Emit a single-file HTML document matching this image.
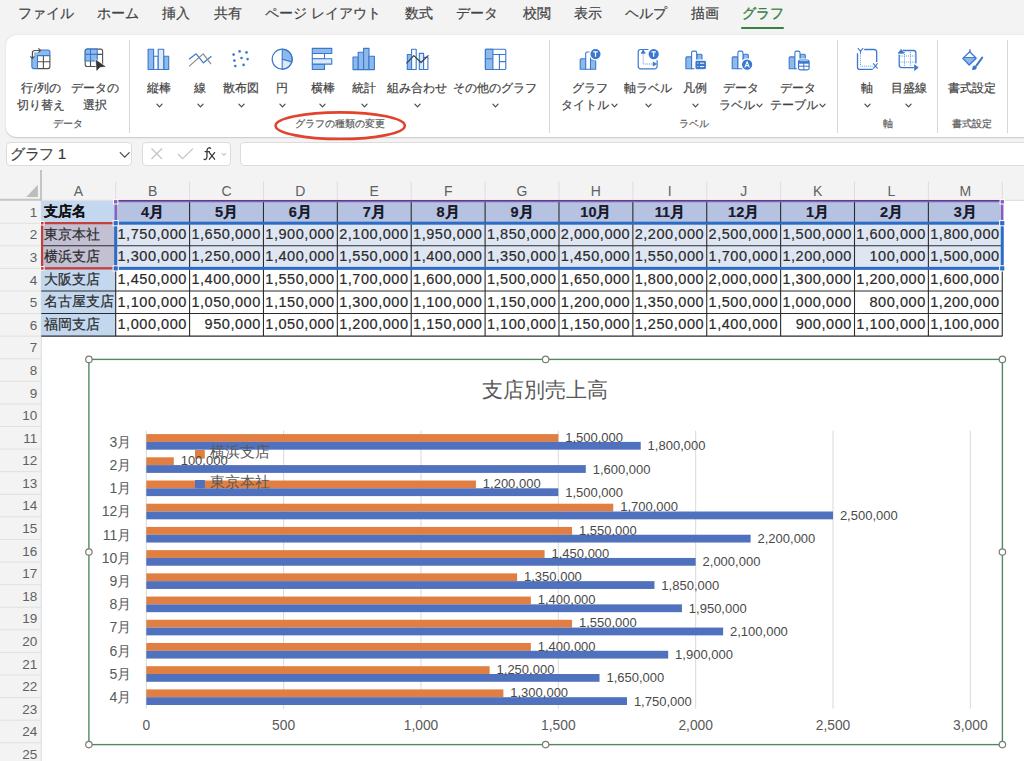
<!DOCTYPE html>
<html lang="ja"><head><meta charset="utf-8"><title>Excel</title><style>
*{box-sizing:border-box}
html,body{margin:0;padding:0}
body{width:1024px;height:761px;overflow:hidden;position:relative;background:#f3f3f3;font-family:"Liberation Sans",sans-serif;color:#424242}
.a{position:absolute;white-space:nowrap;-webkit-text-stroke:0.2px currentColor}
.n{-webkit-text-stroke:0}
.c{text-align:center}
.r{text-align:right}
</style></head><body>
<div class="a" style="left:18.3px;top:7.0px;font-size:13.9px;line-height:13.9px;">ファイル</div>
<div class="a" style="left:96.9px;top:7.0px;font-size:13.9px;line-height:13.9px;">ホーム</div>
<div class="a" style="left:162px;top:7.0px;font-size:13.9px;line-height:13.9px;">挿入</div>
<div class="a" style="left:213.7px;top:7.0px;font-size:13.9px;line-height:13.9px;">共有</div>
<div class="a" style="left:264.8px;top:7.0px;font-size:13.9px;line-height:13.9px;">ページ レイアウト</div>
<div class="a" style="left:405.4px;top:7.0px;font-size:13.9px;line-height:13.9px;">数式</div>
<div class="a" style="left:456.2px;top:7.0px;font-size:13.9px;line-height:13.9px;">データ</div>
<div class="a" style="left:522.6px;top:7.0px;font-size:13.9px;line-height:13.9px;">校閲</div>
<div class="a" style="left:574px;top:7.0px;font-size:13.9px;line-height:13.9px;">表示</div>
<div class="a" style="left:625.3px;top:7.0px;font-size:13.9px;line-height:13.9px;">ヘルプ</div>
<div class="a" style="left:690.5px;top:7.0px;font-size:13.9px;line-height:13.9px;">描画</div>
<div class="a" style="left:742.3px;top:7.0px;font-size:13.9px;line-height:13.9px;color:#3a7f45;-webkit-text-stroke:0.4px #3a7f45;">グラフ</div>
<div class="a" style="left:740.7px;top:26.5px;width:43.3px;height:2.6px;border-radius:2px;background:#3a7f45"></div>
<div class="a" style="left:6px;top:35px;width:1040px;height:102px;background:#fff;border-radius:10px;box-shadow:0 0.5px 1.5px rgba(0,0,0,0.18)"></div>
<div class="a" style="left:129.20000000000002px;top:39.5px;width:1.2px;height:93px;background:#d6d6d6"></div>
<div class="a" style="left:548.9px;top:39.5px;width:1.2px;height:93px;background:#d6d6d6"></div>
<div class="a" style="left:837.1999999999999px;top:39.5px;width:1.2px;height:93px;background:#d6d6d6"></div>
<div class="a" style="left:937.0px;top:39.5px;width:1.2px;height:93px;background:#d6d6d6"></div>
<div class="a" style="left:1007.3px;top:39.5px;width:1.2px;height:93px;background:#d6d6d6"></div>

<svg class="a" style="left:0;top:0" width="1024" height="80" viewBox="0 0 1024 80" fill="none" stroke-linejoin="round">
<!-- row/col switch -->
<path d="M33.85 50H47.9a2 2 0 0 1 2 2V55.6H37.5V68.6H33.85a2 2 0 0 1-2-2V52a2 2 0 0 1 2-2z" fill="#8dbaeb" stroke="#3a78cf" stroke-width="1.1"/>
<path d="M37.5 55.6H49.9V66.6a2 2 0 0 1-2 2H37.5z" fill="#fff"/>
<path d="M49.9 55.6V66.6a2 2 0 0 1-2 2H37.5M43.4 55.6V68.6M37.5 61.8H49.9" stroke="#505050" stroke-width="1.1"/>
<path d="M37.5 68.6V55.6H49.9" stroke="#3a78cf" stroke-width="1.1"/>
<path d="M32.4 58.2V53a2.5 2.5 0 0 1 2.5-2.5H40.2" stroke="#fff" stroke-width="3.4"/>
<path d="M32.4 58.2V53a2.5 2.5 0 0 1 2.5-2.5H40.2" stroke="#505050" stroke-width="1.2"/>
<path d="M38.4 48.4l2.1 2.1-2.1 2.1M30.3 56.4l2.1 2.1 2.1-2.1" stroke="#505050" stroke-width="1.2"/>
<!-- data select -->
<path d="M87.2 49.1h13.4a2 2 0 0 1 2 2v13.4a2 2 0 0 1-2 2h-13.4a2 2 0 0 1-2-2v-13.4a2 2 0 0 1 2-2z" fill="#fff" stroke="#505050" stroke-width="1.1"/>
<path d="M87.2 49.1h10v11.9h-12v-9.9a2 2 0 0 1 2-2z" fill="#8dbaeb" stroke="#3a78cf" stroke-width="1.1"/>
<path d="M90.5 49.1v11.9M85.2 54.4h12" stroke="#3a78cf" stroke-width="1.1"/>
<path d="M90.5 61v5.5M97.2 54.4h5.4" stroke="#505050" stroke-width="1.1"/>
<path d="M96 60.2L105.2 66.5 100 66.9 96.8 70.4z" fill="#fff" stroke="#fff" stroke-width="1.6"/>
<path d="M96 60.2L105.2 66.5 100 66.9 96.8 70.4z" fill="#333" stroke="#333" stroke-width="0.5"/>
<!-- column chart -->
<rect x="153.6" y="56.3" width="4.6" height="13.2" fill="#fff" stroke="#3a78cf" stroke-width="1.1"/>
<rect x="163.7" y="56.3" width="5" height="13.2" fill="#8dbaeb" stroke="#3a78cf" stroke-width="1.1"/>
<rect x="148.1" y="49.3" width="5.5" height="20.2" fill="#8dbaeb" stroke="#3a78cf" stroke-width="1.1"/>
<rect x="158.2" y="49.3" width="5.5" height="20.2" fill="#dce9f8" stroke="#3a78cf" stroke-width="1.1"/>
<!-- line -->
<path d="M189 59.2l7.2-5.4 7.2 9 8-6.6" stroke="#3a78cf" stroke-width="1.2"/>
<path d="M189 66.4l14.2-12.5 7.8 10.3" stroke="#8a8a8a" stroke-width="1.2"/>
<!-- scatter -->
<g fill="#3a78cf"><circle cx="233.6" cy="54.6" r="1.3"/><circle cx="239.6" cy="51.4" r="1.3"/><circle cx="246.5" cy="52.4" r="1.3"/><circle cx="241.5" cy="58" r="1.3"/><circle cx="234.4" cy="60.6" r="1.3"/><circle cx="247.6" cy="59.1" r="1.3"/><circle cx="235.3" cy="66" r="1.3"/><circle cx="243.6" cy="64.9" r="1.3"/></g>
<!-- pie -->
<path d="M282.2 59.2V49.2A10 10 0 0 1 291.8 62z" fill="#8dbaeb" stroke="#3a78cf" stroke-width="1.1"/>
<path d="M282.2 59.2L291.8 62A10 10 0 0 1 282.2 69.2z" fill="#dce9f8" stroke="#3a78cf" stroke-width="1.1"/>
<circle cx="282.2" cy="59.2" r="10" stroke="#3a78cf" stroke-width="1.2"/>
<!-- bar chart -->
<rect x="312.3" y="53.5" width="12.2" height="5.3" fill="#fff" stroke="#3a78cf" stroke-width="1.1"/>
<rect x="312.3" y="64.1" width="12.2" height="5.4" fill="#8dbaeb" stroke="#3a78cf" stroke-width="1.1"/>
<rect x="312.3" y="48.4" width="19.5" height="5.1" fill="#8dbaeb" stroke="#3a78cf" stroke-width="1.1"/>
<rect x="312.3" y="58.8" width="19.5" height="5.3" fill="#dce9f8" stroke="#3a78cf" stroke-width="1.1"/>
<!-- stats -->
<rect x="353" y="57" width="5.2" height="12.6" fill="#8dbaeb" stroke="#3a78cf" stroke-width="1.1"/>
<rect x="358.2" y="52.2" width="5.4" height="17.4" fill="#8dbaeb" stroke="#3a78cf" stroke-width="1.1"/>
<rect x="363.6" y="48.4" width="5.4" height="21.2" fill="#8dbaeb" stroke="#3a78cf" stroke-width="1.1"/>
<rect x="369" y="56.2" width="5.4" height="13.4" fill="#8dbaeb" stroke="#3a78cf" stroke-width="1.1"/>
<!-- combo -->
<rect x="407.3" y="54.5" width="4.3" height="15" fill="#8dbaeb" stroke="#3a78cf" stroke-width="1.1"/>
<rect x="411.6" y="49.3" width="4.6" height="20.2" fill="#fff" stroke="#3a78cf" stroke-width="1.1"/>
<rect x="419.3" y="53.4" width="4.3" height="16.1" fill="#dce9f8" stroke="#3a78cf" stroke-width="1.1"/>
<rect x="423.6" y="57.4" width="4.3" height="12.1" fill="#fff" stroke="#3a78cf" stroke-width="1.1"/>
<path d="M406.5 63.4l7.3-7.8 7.2 6.9 7.5-7.1" stroke="#3c3c3c" stroke-width="1.2"/>
<!-- other charts -->
<rect x="485.4" y="49.3" width="20.4" height="20.2" rx="1" fill="#fff" stroke="#3a78cf" stroke-width="1.1"/>
<rect x="485.4" y="49.3" width="7.5" height="20.2" fill="#8dbaeb" stroke="#3a78cf" stroke-width="1.1"/>
<path d="M485.4 58.7h7.5M492.9 54.5h12.9M499.4 54.5v15M499.4 61.6h6.4" stroke="#3a78cf" stroke-width="1.1"/>
<!-- chart title -->
<path d="M581.2 58.7h3.6a1 1 0 0 1 1 1v9.5h-5.6v-9.5a1 1 0 0 1 1-1z" fill="#8dbaeb" stroke="#3a78cf" stroke-width="1.1"/>
<path d="M591.1 60h3.6a1 1 0 0 1 1 1v8.2h-5.6v-8.2a1 1 0 0 1 1-1z" fill="#8dbaeb" stroke="#3a78cf" stroke-width="1.1"/>
<path d="M587.3 52h1.6a1.6 1.6 0 0 1 1.6 1.6v15.6h-4.8v-15.6a1.6 1.6 0 0 1 1.6-1.6z" fill="#fff" stroke="#3a78cf" stroke-width="1.1"/>
<circle cx="595.5" cy="54.1" r="5.7" fill="#3a78cf" stroke="#fff" stroke-width="1.3"/>
<path d="M593.3 51.8h4.4M595.5 51.8v5" stroke="#fff" stroke-width="1.2"/>
<!-- axis title -->
<path d="M648.5 49.5h-7.8a2.5 2.5 0 0 0-2.5 2.5v14.3a2.5 2.5 0 0 0 2.5 2.5h13.9a2.5 2.5 0 0 0 2.5-2.5v-6" stroke="#3a78cf" stroke-width="1.2"/>
<path d="M643.2 53.6v10.4h10" stroke="#3a78cf" stroke-width="0.8" stroke-dasharray="1 1"/>
<path d="M641.2 53.2l2-3.2 2 3.2z M653.2 62l3.2 2-3.2 2z" fill="#3a78cf" stroke="#3a78cf" stroke-width="0.8"/>
<circle cx="653.7" cy="54.1" r="5.8" fill="#3a78cf" stroke="#fff" stroke-width="1.3"/>
<path d="M651.5 51.8h4.4M653.7 51.8v5" stroke="#fff" stroke-width="1.2"/>
<!-- legend -->
<path d="M686.9 56.9h3.8a1 1 0 0 1 1 1v10.9h-5.8v-10.9a1 1 0 0 1 1-1z" fill="#8dbaeb" stroke="#3a78cf" stroke-width="1.1"/>
<path d="M697.8 54.3h3.2a1 1 0 0 1 1 1v13.5h-5.2v-13.5a1 1 0 0 1 1-1z" fill="#8dbaeb" stroke="#3a78cf" stroke-width="1.1"/>
<path d="M693.1999999999999 51.1h1.9a1.6 1.6 0 0 1 1.6 1.6v16.1h-5.1v-16.1a1.6 1.6 0 0 1 1.6-1.6z" fill="#fff" stroke="#3a78cf" stroke-width="1.1"/>
<rect x="694.9" y="60.1" width="11.6" height="9.7" rx="2" fill="#3a78cf" stroke="#fff" stroke-width="1.1"/>
<path d="M697.4 63.2h1M700 63.2h4.2M697.4 66.6h1M700 66.6h4.2" stroke="#fff" stroke-width="1"/>
<!-- data labels -->
<path d="M733.2 56.9h3.8a1 1 0 0 1 1 1v10.9h-5.8v-10.9a1 1 0 0 1 1-1z" fill="#8dbaeb" stroke="#3a78cf" stroke-width="1.1"/>
<path d="M744.1 54.3h3.2a1 1 0 0 1 1 1v13.5h-5.2v-13.5a1 1 0 0 1 1-1z" fill="#8dbaeb" stroke="#3a78cf" stroke-width="1.1"/>
<path d="M739.5 51.1h1.9a1.6 1.6 0 0 1 1.6 1.6v16.1h-5.1v-16.1a1.6 1.6 0 0 1 1.6-1.6z" fill="#fff" stroke="#3a78cf" stroke-width="1.1"/>
<circle cx="747.1" cy="64.6" r="5.8" fill="#3a78cf" stroke="#fff" stroke-width="1.3"/>
<path d="M744.8 67.6l2.3-6 2.3 6M745.6 65.6h3" stroke="#fff" stroke-width="1.1"/>
<!-- data table -->
<path d="M790.2 56.9h3.8a1 1 0 0 1 1 1v10.9h-5.8v-10.9a1 1 0 0 1 1-1z" fill="#8dbaeb" stroke="#3a78cf" stroke-width="1.1"/>
<path d="M801.1 54.3h3.2a1 1 0 0 1 1 1v13.5h-5.2v-13.5a1 1 0 0 1 1-1z" fill="#8dbaeb" stroke="#3a78cf" stroke-width="1.1"/>
<path d="M796.5 51.1h1.9a1.6 1.6 0 0 1 1.6 1.6v16.1h-5.1v-16.1a1.6 1.6 0 0 1 1.6-1.6z" fill="#fff" stroke="#3a78cf" stroke-width="1.1"/>
<rect x="798" y="59.5" width="11.6" height="10.9" rx="2" fill="#fff" stroke="#fff" stroke-width="2"/>
<rect x="798.5" y="60" width="10.6" height="9.9" rx="1.8" fill="#fff" stroke="#3a78cf" stroke-width="1.2"/>
<path d="M798.5 62.4h10.6" stroke="#3a78cf" stroke-width="2.6"/>
<path d="M803.8 62v7.9M798.5 66.2h10.6" stroke="#3a78cf" stroke-width="1"/>
<!-- axes -->
<path d="M864.2 49.5h10a2.5 2.5 0 0 1 2.5 2.5v10M872.8 69.4h-12.8a2.5 2.5 0 0 1-2.5-2.5v-13.6" stroke="#3a78cf" stroke-width="1.3"/>
<path d="M857.8 48.2l2.7 2.9 2.7-2.9M860.5 51.1v2.6M873.2 63.4l4.4 5.2M877.6 63.4l-4.4 5.2" stroke="#3a78cf" stroke-width="1.1"/>
<path d="M860.5 54.6v11.6h12" stroke="#3a78cf" stroke-width="0.8" stroke-dasharray="0.9 1"/>
<!-- gridlines -->
<path d="M899.2 54.4v10.7a2.5 2.5 0 0 0 2.5 2.5h12.2M902.6 50.5h10.8a2.5 2.5 0 0 1 2.5 2.5v10.6" stroke="#3a78cf" stroke-width="1.3"/>
<path d="M904.5 52v14M910.4 52v14M900.5 56h14M900.5 62.1h14" stroke="#3a78cf" stroke-width="0.8" stroke-dasharray="0.9 1"/>
<path d="M898.2 53.2l2.9-3.8 2.9 3.8z M914.6 64.8l3.6 2.8-3.6 2.8z" fill="#3a78cf" stroke="#3a78cf" stroke-width="0.8"/>
<!-- format -->
<path d="M963.65 57.6H975.6L976.2 58.2 969.2 65 962.8 58.4z" fill="#8dbaeb"/>
<path d="M962.8 58.4L969.8 51.8 976.2 58.2 969.2 65z" stroke="#3a78cf" stroke-width="1.3"/>
<path d="M963.4 57.6h12.4" stroke="#3a78cf" stroke-width="1"/>
<path d="M970 49.2v3.6" stroke="#3a78cf" stroke-width="1.3"/>
<path d="M982.2 57.6l-5.6 7.8" stroke="#3a78cf" stroke-width="2" stroke-linecap="round"/>
<path d="M975.6 65.6c1.4 0.6 1.6 2.6 0.4 3.6-1 0.8-2.8 0.9-4.2 0.6 0.6-0.7 0.5-2.2 1.1-3.2 0.6-1 1.6-1.4 2.7-1z" fill="#3a78cf"/>
</svg>

<div class="a" style="left:-109px;top:81.5px;font-size:11.7px;line-height:11.7px;width:300px;text-align:center;">行/列の</div>
<div class="a" style="left:-109px;top:99.3px;font-size:11.7px;line-height:11.7px;width:300px;text-align:center;">切り替え</div>
<div class="a" style="left:-55.4px;top:81.5px;font-size:11.7px;line-height:11.7px;width:300px;text-align:center;">データの</div>
<div class="a" style="left:-55.4px;top:99.3px;font-size:11.7px;line-height:11.7px;width:300px;text-align:center;">選択</div>
<div class="a" style="left:-82.5px;top:119.2px;font-size:9.8px;line-height:9.8px;width:300px;text-align:center;color:#5a5a5a;">データ</div>
<div class="a" style="left:9px;top:81.5px;font-size:11.7px;line-height:11.7px;width:300px;text-align:center;">縦棒</div>
<svg class="a" style="left:155.5px;top:103.3px" width="7" height="5" viewBox="0 0 7 5"><path d="M0.9 1.2l2.6 2.6 2.6-2.6" fill="none" stroke="#4a4a4a" stroke-width="1.2" stroke-linecap="round" stroke-linejoin="round"/></svg>
<div class="a" style="left:50.3px;top:81.5px;font-size:11.7px;line-height:11.7px;width:300px;text-align:center;">線</div>
<svg class="a" style="left:196.8px;top:103.3px" width="7" height="5" viewBox="0 0 7 5"><path d="M0.9 1.2l2.6 2.6 2.6-2.6" fill="none" stroke="#4a4a4a" stroke-width="1.2" stroke-linecap="round" stroke-linejoin="round"/></svg>
<div class="a" style="left:91.3px;top:81.5px;font-size:11.7px;line-height:11.7px;width:300px;text-align:center;">散布図</div>
<svg class="a" style="left:237.8px;top:103.3px" width="7" height="5" viewBox="0 0 7 5"><path d="M0.9 1.2l2.6 2.6 2.6-2.6" fill="none" stroke="#4a4a4a" stroke-width="1.2" stroke-linecap="round" stroke-linejoin="round"/></svg>
<div class="a" style="left:132px;top:81.5px;font-size:11.7px;line-height:11.7px;width:300px;text-align:center;">円</div>
<svg class="a" style="left:278.5px;top:103.3px" width="7" height="5" viewBox="0 0 7 5"><path d="M0.9 1.2l2.6 2.6 2.6-2.6" fill="none" stroke="#4a4a4a" stroke-width="1.2" stroke-linecap="round" stroke-linejoin="round"/></svg>
<div class="a" style="left:172.6px;top:81.5px;font-size:11.7px;line-height:11.7px;width:300px;text-align:center;">横棒</div>
<svg class="a" style="left:319.1px;top:103.3px" width="7" height="5" viewBox="0 0 7 5"><path d="M0.9 1.2l2.6 2.6 2.6-2.6" fill="none" stroke="#4a4a4a" stroke-width="1.2" stroke-linecap="round" stroke-linejoin="round"/></svg>
<div class="a" style="left:214.2px;top:81.5px;font-size:11.7px;line-height:11.7px;width:300px;text-align:center;">統計</div>
<svg class="a" style="left:360.7px;top:103.3px" width="7" height="5" viewBox="0 0 7 5"><path d="M0.9 1.2l2.6 2.6 2.6-2.6" fill="none" stroke="#4a4a4a" stroke-width="1.2" stroke-linecap="round" stroke-linejoin="round"/></svg>
<div class="a" style="left:267.3px;top:81.5px;font-size:11.7px;line-height:11.7px;width:300px;text-align:center;">組み合わせ</div>
<svg class="a" style="left:413.8px;top:103.3px" width="7" height="5" viewBox="0 0 7 5"><path d="M0.9 1.2l2.6 2.6 2.6-2.6" fill="none" stroke="#4a4a4a" stroke-width="1.2" stroke-linecap="round" stroke-linejoin="round"/></svg>
<div class="a" style="left:345.4px;top:81.5px;font-size:11.7px;line-height:11.7px;width:300px;text-align:center;">その他のグラフ</div>
<svg class="a" style="left:491.9px;top:103.3px" width="7" height="5" viewBox="0 0 7 5"><path d="M0.9 1.2l2.6 2.6 2.6-2.6" fill="none" stroke="#4a4a4a" stroke-width="1.2" stroke-linecap="round" stroke-linejoin="round"/></svg>
<div class="a" style="left:189.7px;top:119.2px;font-size:9.8px;line-height:9.8px;width:300px;text-align:center;color:#5a5a5a;">グラフの種類の変更</div>
<div class="a" style="left:439.7px;top:81.5px;font-size:11.7px;line-height:11.7px;width:300px;text-align:center;">グラフ</div>
<div class="a" style="left:439.7px;top:99.3px;font-size:11.7px;line-height:11.7px;width:300px;text-align:center;">タイトル<svg width="7" height="5" viewBox="0 0 7 5" style="margin-left:1.5px;vertical-align:1.5px"><path d="M0.9 1.2l2.6 2.6 2.6-2.6" fill="none" stroke="#4a4a4a" stroke-width="1.2" stroke-linecap="round" stroke-linejoin="round"/></svg></div>
<div class="a" style="left:497.7px;top:81.5px;font-size:11.7px;line-height:11.7px;width:300px;text-align:center;">軸ラベル</div>
<svg class="a" style="left:645.1px;top:103.3px" width="7" height="5" viewBox="0 0 7 5"><path d="M0.9 1.2l2.6 2.6 2.6-2.6" fill="none" stroke="#4a4a4a" stroke-width="1.2" stroke-linecap="round" stroke-linejoin="round"/></svg>
<div class="a" style="left:545px;top:81.5px;font-size:11.7px;line-height:11.7px;width:300px;text-align:center;">凡例</div>
<svg class="a" style="left:691.5px;top:103.3px" width="7" height="5" viewBox="0 0 7 5"><path d="M0.9 1.2l2.6 2.6 2.6-2.6" fill="none" stroke="#4a4a4a" stroke-width="1.2" stroke-linecap="round" stroke-linejoin="round"/></svg>
<div class="a" style="left:591.2px;top:81.5px;font-size:11.7px;line-height:11.7px;width:300px;text-align:center;">データ</div>
<div class="a" style="left:591.2px;top:99.3px;font-size:11.7px;line-height:11.7px;width:300px;text-align:center;">ラベル<svg width="7" height="5" viewBox="0 0 7 5" style="margin-left:1.5px;vertical-align:1.5px"><path d="M0.9 1.2l2.6 2.6 2.6-2.6" fill="none" stroke="#4a4a4a" stroke-width="1.2" stroke-linecap="round" stroke-linejoin="round"/></svg></div>
<div class="a" style="left:647.9px;top:81.5px;font-size:11.7px;line-height:11.7px;width:300px;text-align:center;">データ</div>
<div class="a" style="left:647.9px;top:99.3px;font-size:11.7px;line-height:11.7px;width:300px;text-align:center;">テーブル<svg width="7" height="5" viewBox="0 0 7 5" style="margin-left:1.5px;vertical-align:1.5px"><path d="M0.9 1.2l2.6 2.6 2.6-2.6" fill="none" stroke="#4a4a4a" stroke-width="1.2" stroke-linecap="round" stroke-linejoin="round"/></svg></div>
<div class="a" style="left:544px;top:119.2px;font-size:9.8px;line-height:9.8px;width:300px;text-align:center;color:#5a5a5a;">ラベル</div>
<div class="a" style="left:717.3px;top:81.5px;font-size:11.7px;line-height:11.7px;width:300px;text-align:center;">軸</div>
<svg class="a" style="left:863.8px;top:103.3px" width="7" height="5" viewBox="0 0 7 5"><path d="M0.9 1.2l2.6 2.6 2.6-2.6" fill="none" stroke="#4a4a4a" stroke-width="1.2" stroke-linecap="round" stroke-linejoin="round"/></svg>
<div class="a" style="left:758.6px;top:81.5px;font-size:11.7px;line-height:11.7px;width:300px;text-align:center;">目盛線</div>
<svg class="a" style="left:905.1px;top:103.3px" width="7" height="5" viewBox="0 0 7 5"><path d="M0.9 1.2l2.6 2.6 2.6-2.6" fill="none" stroke="#4a4a4a" stroke-width="1.2" stroke-linecap="round" stroke-linejoin="round"/></svg>
<div class="a" style="left:737.8px;top:119.2px;font-size:9.8px;line-height:9.8px;width:300px;text-align:center;color:#5a5a5a;">軸</div>
<div class="a" style="left:822.4px;top:81.5px;font-size:11.7px;line-height:11.7px;width:300px;text-align:center;">書式設定</div>
<div class="a" style="left:822.4px;top:119.2px;font-size:9.8px;line-height:9.8px;width:300px;text-align:center;color:#5a5a5a;">書式設定</div>
<svg class="a" style="left:270px;top:108px" width="142" height="36" viewBox="270 108 142 36"><ellipse cx="340.2" cy="125.7" rx="64.6" ry="13.3" fill="none" stroke="#e0442e" stroke-width="2.6"/></svg>
<div class="a" style="left:6.3px;top:142.2px;width:126.2px;height:23.6px;background:#fff;border:1px solid #dcdcdc;border-radius:4px"></div>
<div class="a" style="left:10.1px;top:146.0px;font-size:15.3px;line-height:15.3px;color:#3a3a3a;letter-spacing:-0.4px;">グラフ 1</div>
<svg class="a" style="left:117px;top:150px" width="14" height="9" viewBox="0 0 14 9"><path d="M3.2 2.6l4.5 4.5 4.5-4.5" fill="none" stroke="#404040" stroke-width="1.15" stroke-linecap="round" stroke-linejoin="round"/></svg>
<div class="a" style="left:142px;top:142.2px;width:88.6px;height:23.6px;background:#fff;border:1px solid #dcdcdc;border-radius:4px"></div>
<svg class="a" style="left:142px;top:142px" width="100" height="24" viewBox="142 142 100 24"><path d="M151.5 148.5l10.5 10.5M162 148.5l-10.5 10.5" stroke="#c4c4c4" stroke-width="1.3"/><path d="M178 154l4.5 4.6 10.5-10" fill="none" stroke="#c4c4c4" stroke-width="1.3"/><path d="M221.8 153.2l2.1 2.1 2.1-2.1" fill="none" stroke="#9a9a9a" stroke-width="0.9"/></svg>
<svg class="a" style="left:200px;top:144px" width="20" height="18" viewBox="200 144 20 18"><path d="M210.6 148.2c-0.5-0.4-1.2-0.5-1.8-0.4-1 0.2-1.6 1-1.7 2.2l-0.2 7.2c-0.1 1.3-0.7 2.1-1.7 2.3-0.5 0.1-0.9 0-1.2-0.2M205 151.6h4.4" fill="none" stroke="#3a3a3a" stroke-width="1.3" stroke-linecap="round"/><path d="M209.4 152.6l5.2 6.6M214.6 152.6l-5.2 6.6" stroke="#3a3a3a" stroke-width="1.3" stroke-linecap="round"/></svg>
<div class="a" style="left:240px;top:142.2px;width:800px;height:23.6px;background:#fff;border:1px solid #dcdcdc;border-radius:4px"></div>
<div class="a" style="left:41.3px;top:200.6px;width:982.7px;height:560.4px;background:#fff"></div>
<svg class="a" style="left:0;top:0" width="1024" height="761" viewBox="0 0 1024 761"><path d="M0 223.19H41.3" stroke="#e0e0e0" stroke-width="1"/><path d="M0 245.78H41.3" stroke="#e0e0e0" stroke-width="1"/><path d="M0 268.37H41.3" stroke="#e0e0e0" stroke-width="1"/><path d="M0 290.96H41.3" stroke="#e0e0e0" stroke-width="1"/><path d="M0 313.55H41.3" stroke="#e0e0e0" stroke-width="1"/><path d="M0 336.14H41.3" stroke="#e0e0e0" stroke-width="1"/><path d="M0 358.73H41.3" stroke="#e0e0e0" stroke-width="1"/><path d="M0 381.32H41.3" stroke="#e0e0e0" stroke-width="1"/><path d="M0 403.90999999999997H41.3" stroke="#e0e0e0" stroke-width="1"/><path d="M0 426.5H41.3" stroke="#e0e0e0" stroke-width="1"/><path d="M0 449.09000000000003H41.3" stroke="#e0e0e0" stroke-width="1"/><path d="M0 471.67999999999995H41.3" stroke="#e0e0e0" stroke-width="1"/><path d="M0 494.27H41.3" stroke="#e0e0e0" stroke-width="1"/><path d="M0 516.86H41.3" stroke="#e0e0e0" stroke-width="1"/><path d="M0 539.45H41.3" stroke="#e0e0e0" stroke-width="1"/><path d="M0 562.04H41.3" stroke="#e0e0e0" stroke-width="1"/><path d="M0 584.63H41.3" stroke="#e0e0e0" stroke-width="1"/><path d="M0 607.22H41.3" stroke="#e0e0e0" stroke-width="1"/><path d="M0 629.81H41.3" stroke="#e0e0e0" stroke-width="1"/><path d="M0 652.4H41.3" stroke="#e0e0e0" stroke-width="1"/><path d="M0 674.99H41.3" stroke="#e0e0e0" stroke-width="1"/><path d="M0 697.58H41.3" stroke="#e0e0e0" stroke-width="1"/><path d="M0 720.1700000000001H41.3" stroke="#e0e0e0" stroke-width="1"/><path d="M0 742.76H41.3" stroke="#e0e0e0" stroke-width="1"/><path d="M0 765.35H41.3" stroke="#e0e0e0" stroke-width="1"/><path d="M115.7 181.5V200.6" stroke="#dedede" stroke-width="1"/><path d="M189.57999999999998 181.5V200.6" stroke="#dedede" stroke-width="1"/><path d="M263.46 181.5V200.6" stroke="#dedede" stroke-width="1"/><path d="M337.34 181.5V200.6" stroke="#dedede" stroke-width="1"/><path d="M411.21999999999997 181.5V200.6" stroke="#dedede" stroke-width="1"/><path d="M485.09999999999997 181.5V200.6" stroke="#dedede" stroke-width="1"/><path d="M558.98 181.5V200.6" stroke="#dedede" stroke-width="1"/><path d="M632.86 181.5V200.6" stroke="#dedede" stroke-width="1"/><path d="M706.74 181.5V200.6" stroke="#dedede" stroke-width="1"/><path d="M780.62 181.5V200.6" stroke="#dedede" stroke-width="1"/><path d="M854.5 181.5V200.6" stroke="#dedede" stroke-width="1"/><path d="M928.38 181.5V200.6" stroke="#dedede" stroke-width="1"/><path d="M1002.26 181.5V200.6" stroke="#dedede" stroke-width="1"/><path d="M41.3 200.29999999999998H1024" stroke="#dcdcdc" stroke-width="1"/><path d="M41 169.9V201M0 199.8H42" stroke="#c4c4c4" stroke-width="2"/><path d="M26.2 196.9H37.9V184.7z" fill="#bdbdbd"/><path d="M41.3 200.6V761" stroke="#dcdcdc" stroke-width="1"/></svg>
<div class="a" style="left:-71.5px;top:183.6px;font-size:14px;line-height:14px;width:300px;text-align:center;color:#616161;-webkit-text-stroke:0;">A</div>
<div class="a" style="left:2.64px;top:183.6px;font-size:14px;line-height:14px;width:300px;text-align:center;color:#616161;-webkit-text-stroke:0;">B</div>
<div class="a" style="left:76.52px;top:183.6px;font-size:14px;line-height:14px;width:300px;text-align:center;color:#616161;-webkit-text-stroke:0;">C</div>
<div class="a" style="left:150.4px;top:183.6px;font-size:14px;line-height:14px;width:300px;text-align:center;color:#616161;-webkit-text-stroke:0;">D</div>
<div class="a" style="left:224.28px;top:183.6px;font-size:14px;line-height:14px;width:300px;text-align:center;color:#616161;-webkit-text-stroke:0;">E</div>
<div class="a" style="left:298.16px;top:183.6px;font-size:14px;line-height:14px;width:300px;text-align:center;color:#616161;-webkit-text-stroke:0;">F</div>
<div class="a" style="left:372.04px;top:183.6px;font-size:14px;line-height:14px;width:300px;text-align:center;color:#616161;-webkit-text-stroke:0;">G</div>
<div class="a" style="left:445.92px;top:183.6px;font-size:14px;line-height:14px;width:300px;text-align:center;color:#616161;-webkit-text-stroke:0;">H</div>
<div class="a" style="left:519.8px;top:183.6px;font-size:14px;line-height:14px;width:300px;text-align:center;color:#616161;-webkit-text-stroke:0;">I</div>
<div class="a" style="left:593.68px;top:183.6px;font-size:14px;line-height:14px;width:300px;text-align:center;color:#616161;-webkit-text-stroke:0;">J</div>
<div class="a" style="left:667.56px;top:183.6px;font-size:14px;line-height:14px;width:300px;text-align:center;color:#616161;-webkit-text-stroke:0;">K</div>
<div class="a" style="left:741.44px;top:183.6px;font-size:14px;line-height:14px;width:300px;text-align:center;color:#616161;-webkit-text-stroke:0;">L</div>
<div class="a" style="left:815.32px;top:183.6px;font-size:14px;line-height:14px;width:300px;text-align:center;color:#616161;-webkit-text-stroke:0;">M</div>
<div class="a" style="left:0px;top:205.79999999999998px;font-size:13.5px;line-height:13.5px;width:37.3px;text-align:right;color:#616161;-webkit-text-stroke:0;">1</div>
<div class="a" style="left:0px;top:228.39px;font-size:13.5px;line-height:13.5px;width:37.3px;text-align:right;color:#616161;-webkit-text-stroke:0;">2</div>
<div class="a" style="left:0px;top:250.98px;font-size:13.5px;line-height:13.5px;width:37.3px;text-align:right;color:#616161;-webkit-text-stroke:0;">3</div>
<div class="a" style="left:0px;top:273.57px;font-size:13.5px;line-height:13.5px;width:37.3px;text-align:right;color:#616161;-webkit-text-stroke:0;">4</div>
<div class="a" style="left:0px;top:296.15999999999997px;font-size:13.5px;line-height:13.5px;width:37.3px;text-align:right;color:#616161;-webkit-text-stroke:0;">5</div>
<div class="a" style="left:0px;top:318.75px;font-size:13.5px;line-height:13.5px;width:37.3px;text-align:right;color:#616161;-webkit-text-stroke:0;">6</div>
<div class="a" style="left:0px;top:341.34px;font-size:13.5px;line-height:13.5px;width:37.3px;text-align:right;color:#616161;-webkit-text-stroke:0;">7</div>
<div class="a" style="left:0px;top:363.93px;font-size:13.5px;line-height:13.5px;width:37.3px;text-align:right;color:#616161;-webkit-text-stroke:0;">8</div>
<div class="a" style="left:0px;top:386.52px;font-size:13.5px;line-height:13.5px;width:37.3px;text-align:right;color:#616161;-webkit-text-stroke:0;">9</div>
<div class="a" style="left:0px;top:409.10999999999996px;font-size:13.5px;line-height:13.5px;width:37.3px;text-align:right;color:#616161;-webkit-text-stroke:0;">10</div>
<div class="a" style="left:0px;top:431.7px;font-size:13.5px;line-height:13.5px;width:37.3px;text-align:right;color:#616161;-webkit-text-stroke:0;">11</div>
<div class="a" style="left:0px;top:454.29px;font-size:13.5px;line-height:13.5px;width:37.3px;text-align:right;color:#616161;-webkit-text-stroke:0;">12</div>
<div class="a" style="left:0px;top:476.87999999999994px;font-size:13.5px;line-height:13.5px;width:37.3px;text-align:right;color:#616161;-webkit-text-stroke:0;">13</div>
<div class="a" style="left:0px;top:499.46999999999997px;font-size:13.5px;line-height:13.5px;width:37.3px;text-align:right;color:#616161;-webkit-text-stroke:0;">14</div>
<div class="a" style="left:0px;top:522.0600000000001px;font-size:13.5px;line-height:13.5px;width:37.3px;text-align:right;color:#616161;-webkit-text-stroke:0;">15</div>
<div class="a" style="left:0px;top:544.6500000000001px;font-size:13.5px;line-height:13.5px;width:37.3px;text-align:right;color:#616161;-webkit-text-stroke:0;">16</div>
<div class="a" style="left:0px;top:567.24px;font-size:13.5px;line-height:13.5px;width:37.3px;text-align:right;color:#616161;-webkit-text-stroke:0;">17</div>
<div class="a" style="left:0px;top:589.83px;font-size:13.5px;line-height:13.5px;width:37.3px;text-align:right;color:#616161;-webkit-text-stroke:0;">18</div>
<div class="a" style="left:0px;top:612.4200000000001px;font-size:13.5px;line-height:13.5px;width:37.3px;text-align:right;color:#616161;-webkit-text-stroke:0;">19</div>
<div class="a" style="left:0px;top:635.01px;font-size:13.5px;line-height:13.5px;width:37.3px;text-align:right;color:#616161;-webkit-text-stroke:0;">20</div>
<div class="a" style="left:0px;top:657.6px;font-size:13.5px;line-height:13.5px;width:37.3px;text-align:right;color:#616161;-webkit-text-stroke:0;">21</div>
<div class="a" style="left:0px;top:680.19px;font-size:13.5px;line-height:13.5px;width:37.3px;text-align:right;color:#616161;-webkit-text-stroke:0;">22</div>
<div class="a" style="left:0px;top:702.7800000000001px;font-size:13.5px;line-height:13.5px;width:37.3px;text-align:right;color:#616161;-webkit-text-stroke:0;">23</div>
<div class="a" style="left:0px;top:725.3700000000001px;font-size:13.5px;line-height:13.5px;width:37.3px;text-align:right;color:#616161;-webkit-text-stroke:0;">24</div>
<div class="a" style="left:0px;top:747.96px;font-size:13.5px;line-height:13.5px;width:37.3px;text-align:right;color:#616161;-webkit-text-stroke:0;">25</div>
<div class="a" style="left:41.3px;top:200.6px;width:74.4px;height:22.590000000000003px;background:#c3d8ef"></div>
<div class="a" style="left:41.3px;top:268.37px;width:74.4px;height:67.76999999999998px;background:#c3d8ef"></div>
<div class="a" style="left:41.3px;top:223.19px;width:74.4px;height:45.18000000000001px;background:#c2c0d2"></div>
<div class="a" style="left:115.7px;top:200.6px;width:886.56px;height:22.590000000000003px;background:#b5c2e2"></div>
<div class="a" style="left:115.7px;top:223.19px;width:886.56px;height:45.18000000000001px;background:#dfe6f3"></div>
<svg class="a" style="left:0;top:0" width="1024" height="761" viewBox="0 0 1024 761"><path d="M115.7 200.6H1002.26" stroke="#2b2b2b" stroke-width="1.1"/><path d="M41.3 223.19H1002.26" stroke="#2b2b2b" stroke-width="1.1"/><path d="M41.3 245.78H1002.26" stroke="#2b2b2b" stroke-width="1.1"/><path d="M41.3 268.37H1002.26" stroke="#2b2b2b" stroke-width="1.1"/><path d="M41.3 290.96H1002.26" stroke="#2b2b2b" stroke-width="1.1"/><path d="M41.3 313.55H1002.26" stroke="#2b2b2b" stroke-width="1.1"/><path d="M41.3 336.14H1002.26" stroke="#2b2b2b" stroke-width="1.1"/><path d="M115.7 200.6V336.14" stroke="#2b2b2b" stroke-width="1.1"/><path d="M189.57999999999998 200.6V336.14" stroke="#2b2b2b" stroke-width="1.1"/><path d="M263.46 200.6V336.14" stroke="#2b2b2b" stroke-width="1.1"/><path d="M337.34 200.6V336.14" stroke="#2b2b2b" stroke-width="1.1"/><path d="M411.21999999999997 200.6V336.14" stroke="#2b2b2b" stroke-width="1.1"/><path d="M485.09999999999997 200.6V336.14" stroke="#2b2b2b" stroke-width="1.1"/><path d="M558.98 200.6V336.14" stroke="#2b2b2b" stroke-width="1.1"/><path d="M632.86 200.6V336.14" stroke="#2b2b2b" stroke-width="1.1"/><path d="M706.74 200.6V336.14" stroke="#2b2b2b" stroke-width="1.1"/><path d="M780.62 200.6V336.14" stroke="#2b2b2b" stroke-width="1.1"/><path d="M854.5 200.6V336.14" stroke="#2b2b2b" stroke-width="1.1"/><path d="M928.38 200.6V336.14" stroke="#2b2b2b" stroke-width="1.1"/><path d="M1002.26 200.6V336.14" stroke="#2b2b2b" stroke-width="1.1"/></svg>
<div class="a" style="left:44.2px;top:205.29999999999998px;font-size:13.5px;line-height:13.5px;color:#111;font-weight:bold;">支店名</div>
<div class="a" style="left:2.64px;top:205.2px;font-size:14.5px;line-height:14.5px;width:300px;text-align:center;color:#1a1a2a;font-weight:bold;">4月</div>
<div class="a" style="left:76.52px;top:205.2px;font-size:14.5px;line-height:14.5px;width:300px;text-align:center;color:#1a1a2a;font-weight:bold;">5月</div>
<div class="a" style="left:150.4px;top:205.2px;font-size:14.5px;line-height:14.5px;width:300px;text-align:center;color:#1a1a2a;font-weight:bold;">6月</div>
<div class="a" style="left:224.28px;top:205.2px;font-size:14.5px;line-height:14.5px;width:300px;text-align:center;color:#1a1a2a;font-weight:bold;">7月</div>
<div class="a" style="left:298.16px;top:205.2px;font-size:14.5px;line-height:14.5px;width:300px;text-align:center;color:#1a1a2a;font-weight:bold;">8月</div>
<div class="a" style="left:372.04px;top:205.2px;font-size:14.5px;line-height:14.5px;width:300px;text-align:center;color:#1a1a2a;font-weight:bold;">9月</div>
<div class="a" style="left:445.92px;top:205.2px;font-size:14.5px;line-height:14.5px;width:300px;text-align:center;color:#1a1a2a;font-weight:bold;">10月</div>
<div class="a" style="left:519.8px;top:205.2px;font-size:14.5px;line-height:14.5px;width:300px;text-align:center;color:#1a1a2a;font-weight:bold;">11月</div>
<div class="a" style="left:593.68px;top:205.2px;font-size:14.5px;line-height:14.5px;width:300px;text-align:center;color:#1a1a2a;font-weight:bold;">12月</div>
<div class="a" style="left:667.56px;top:205.2px;font-size:14.5px;line-height:14.5px;width:300px;text-align:center;color:#1a1a2a;font-weight:bold;">1月</div>
<div class="a" style="left:741.44px;top:205.2px;font-size:14.5px;line-height:14.5px;width:300px;text-align:center;color:#1a1a2a;font-weight:bold;">2月</div>
<div class="a" style="left:815.32px;top:205.2px;font-size:14.5px;line-height:14.5px;width:300px;text-align:center;color:#1a1a2a;font-weight:bold;">3月</div>
<div class="a" style="left:44.2px;top:227.59px;font-size:13.6px;line-height:13.6px;color:#2a2a2a;">東京本社</div>
<div class="a" style="left:86.97999999999999px;top:226.89px;font-size:14.5px;line-height:14.5px;width:100px;text-align:right;color:#2a2a2a;letter-spacing:0.55px;">1,750,000</div>
<div class="a" style="left:160.85999999999996px;top:226.89px;font-size:14.5px;line-height:14.5px;width:100px;text-align:right;color:#2a2a2a;letter-spacing:0.55px;">1,650,000</div>
<div class="a" style="left:234.73999999999995px;top:226.89px;font-size:14.5px;line-height:14.5px;width:100px;text-align:right;color:#2a2a2a;letter-spacing:0.55px;">1,900,000</div>
<div class="a" style="left:308.61999999999995px;top:226.89px;font-size:14.5px;line-height:14.5px;width:100px;text-align:right;color:#2a2a2a;letter-spacing:0.55px;">2,100,000</div>
<div class="a" style="left:382.49999999999994px;top:226.89px;font-size:14.5px;line-height:14.5px;width:100px;text-align:right;color:#2a2a2a;letter-spacing:0.55px;">1,950,000</div>
<div class="a" style="left:456.38px;top:226.89px;font-size:14.5px;line-height:14.5px;width:100px;text-align:right;color:#2a2a2a;letter-spacing:0.55px;">1,850,000</div>
<div class="a" style="left:530.26px;top:226.89px;font-size:14.5px;line-height:14.5px;width:100px;text-align:right;color:#2a2a2a;letter-spacing:0.55px;">2,000,000</div>
<div class="a" style="left:604.14px;top:226.89px;font-size:14.5px;line-height:14.5px;width:100px;text-align:right;color:#2a2a2a;letter-spacing:0.55px;">2,200,000</div>
<div class="a" style="left:678.02px;top:226.89px;font-size:14.5px;line-height:14.5px;width:100px;text-align:right;color:#2a2a2a;letter-spacing:0.55px;">2,500,000</div>
<div class="a" style="left:751.9px;top:226.89px;font-size:14.5px;line-height:14.5px;width:100px;text-align:right;color:#2a2a2a;letter-spacing:0.55px;">1,500,000</div>
<div class="a" style="left:825.78px;top:226.89px;font-size:14.5px;line-height:14.5px;width:100px;text-align:right;color:#2a2a2a;letter-spacing:0.55px;">1,600,000</div>
<div class="a" style="left:899.66px;top:226.89px;font-size:14.5px;line-height:14.5px;width:100px;text-align:right;color:#2a2a2a;letter-spacing:0.55px;">1,800,000</div>
<div class="a" style="left:44.2px;top:250.18px;font-size:13.6px;line-height:13.6px;color:#2a2a2a;">横浜支店</div>
<div class="a" style="left:86.97999999999999px;top:249.48px;font-size:14.5px;line-height:14.5px;width:100px;text-align:right;color:#2a2a2a;letter-spacing:0.55px;">1,300,000</div>
<div class="a" style="left:160.85999999999996px;top:249.48px;font-size:14.5px;line-height:14.5px;width:100px;text-align:right;color:#2a2a2a;letter-spacing:0.55px;">1,250,000</div>
<div class="a" style="left:234.73999999999995px;top:249.48px;font-size:14.5px;line-height:14.5px;width:100px;text-align:right;color:#2a2a2a;letter-spacing:0.55px;">1,400,000</div>
<div class="a" style="left:308.61999999999995px;top:249.48px;font-size:14.5px;line-height:14.5px;width:100px;text-align:right;color:#2a2a2a;letter-spacing:0.55px;">1,550,000</div>
<div class="a" style="left:382.49999999999994px;top:249.48px;font-size:14.5px;line-height:14.5px;width:100px;text-align:right;color:#2a2a2a;letter-spacing:0.55px;">1,400,000</div>
<div class="a" style="left:456.38px;top:249.48px;font-size:14.5px;line-height:14.5px;width:100px;text-align:right;color:#2a2a2a;letter-spacing:0.55px;">1,350,000</div>
<div class="a" style="left:530.26px;top:249.48px;font-size:14.5px;line-height:14.5px;width:100px;text-align:right;color:#2a2a2a;letter-spacing:0.55px;">1,450,000</div>
<div class="a" style="left:604.14px;top:249.48px;font-size:14.5px;line-height:14.5px;width:100px;text-align:right;color:#2a2a2a;letter-spacing:0.55px;">1,550,000</div>
<div class="a" style="left:678.02px;top:249.48px;font-size:14.5px;line-height:14.5px;width:100px;text-align:right;color:#2a2a2a;letter-spacing:0.55px;">1,700,000</div>
<div class="a" style="left:751.9px;top:249.48px;font-size:14.5px;line-height:14.5px;width:100px;text-align:right;color:#2a2a2a;letter-spacing:0.55px;">1,200,000</div>
<div class="a" style="left:825.78px;top:249.48px;font-size:14.5px;line-height:14.5px;width:100px;text-align:right;color:#2a2a2a;letter-spacing:0.55px;">100,000</div>
<div class="a" style="left:899.66px;top:249.48px;font-size:14.5px;line-height:14.5px;width:100px;text-align:right;color:#2a2a2a;letter-spacing:0.55px;">1,500,000</div>
<div class="a" style="left:44.2px;top:272.77000000000004px;font-size:13.6px;line-height:13.6px;color:#2a2a2a;">大阪支店</div>
<div class="a" style="left:86.97999999999999px;top:272.07000000000005px;font-size:14.5px;line-height:14.5px;width:100px;text-align:right;color:#2a2a2a;letter-spacing:0.55px;">1,450,000</div>
<div class="a" style="left:160.85999999999996px;top:272.07000000000005px;font-size:14.5px;line-height:14.5px;width:100px;text-align:right;color:#2a2a2a;letter-spacing:0.55px;">1,400,000</div>
<div class="a" style="left:234.73999999999995px;top:272.07000000000005px;font-size:14.5px;line-height:14.5px;width:100px;text-align:right;color:#2a2a2a;letter-spacing:0.55px;">1,550,000</div>
<div class="a" style="left:308.61999999999995px;top:272.07000000000005px;font-size:14.5px;line-height:14.5px;width:100px;text-align:right;color:#2a2a2a;letter-spacing:0.55px;">1,700,000</div>
<div class="a" style="left:382.49999999999994px;top:272.07000000000005px;font-size:14.5px;line-height:14.5px;width:100px;text-align:right;color:#2a2a2a;letter-spacing:0.55px;">1,600,000</div>
<div class="a" style="left:456.38px;top:272.07000000000005px;font-size:14.5px;line-height:14.5px;width:100px;text-align:right;color:#2a2a2a;letter-spacing:0.55px;">1,500,000</div>
<div class="a" style="left:530.26px;top:272.07000000000005px;font-size:14.5px;line-height:14.5px;width:100px;text-align:right;color:#2a2a2a;letter-spacing:0.55px;">1,650,000</div>
<div class="a" style="left:604.14px;top:272.07000000000005px;font-size:14.5px;line-height:14.5px;width:100px;text-align:right;color:#2a2a2a;letter-spacing:0.55px;">1,800,000</div>
<div class="a" style="left:678.02px;top:272.07000000000005px;font-size:14.5px;line-height:14.5px;width:100px;text-align:right;color:#2a2a2a;letter-spacing:0.55px;">2,000,000</div>
<div class="a" style="left:751.9px;top:272.07000000000005px;font-size:14.5px;line-height:14.5px;width:100px;text-align:right;color:#2a2a2a;letter-spacing:0.55px;">1,300,000</div>
<div class="a" style="left:825.78px;top:272.07000000000005px;font-size:14.5px;line-height:14.5px;width:100px;text-align:right;color:#2a2a2a;letter-spacing:0.55px;">1,200,000</div>
<div class="a" style="left:899.66px;top:272.07000000000005px;font-size:14.5px;line-height:14.5px;width:100px;text-align:right;color:#2a2a2a;letter-spacing:0.55px;">1,600,000</div>
<div class="a" style="left:44.2px;top:295.36px;font-size:13.6px;line-height:13.6px;color:#2a2a2a;">名古屋支店</div>
<div class="a" style="left:86.97999999999999px;top:294.66px;font-size:14.5px;line-height:14.5px;width:100px;text-align:right;color:#2a2a2a;letter-spacing:0.55px;">1,100,000</div>
<div class="a" style="left:160.85999999999996px;top:294.66px;font-size:14.5px;line-height:14.5px;width:100px;text-align:right;color:#2a2a2a;letter-spacing:0.55px;">1,050,000</div>
<div class="a" style="left:234.73999999999995px;top:294.66px;font-size:14.5px;line-height:14.5px;width:100px;text-align:right;color:#2a2a2a;letter-spacing:0.55px;">1,150,000</div>
<div class="a" style="left:308.61999999999995px;top:294.66px;font-size:14.5px;line-height:14.5px;width:100px;text-align:right;color:#2a2a2a;letter-spacing:0.55px;">1,300,000</div>
<div class="a" style="left:382.49999999999994px;top:294.66px;font-size:14.5px;line-height:14.5px;width:100px;text-align:right;color:#2a2a2a;letter-spacing:0.55px;">1,100,000</div>
<div class="a" style="left:456.38px;top:294.66px;font-size:14.5px;line-height:14.5px;width:100px;text-align:right;color:#2a2a2a;letter-spacing:0.55px;">1,150,000</div>
<div class="a" style="left:530.26px;top:294.66px;font-size:14.5px;line-height:14.5px;width:100px;text-align:right;color:#2a2a2a;letter-spacing:0.55px;">1,200,000</div>
<div class="a" style="left:604.14px;top:294.66px;font-size:14.5px;line-height:14.5px;width:100px;text-align:right;color:#2a2a2a;letter-spacing:0.55px;">1,350,000</div>
<div class="a" style="left:678.02px;top:294.66px;font-size:14.5px;line-height:14.5px;width:100px;text-align:right;color:#2a2a2a;letter-spacing:0.55px;">1,500,000</div>
<div class="a" style="left:751.9px;top:294.66px;font-size:14.5px;line-height:14.5px;width:100px;text-align:right;color:#2a2a2a;letter-spacing:0.55px;">1,000,000</div>
<div class="a" style="left:825.78px;top:294.66px;font-size:14.5px;line-height:14.5px;width:100px;text-align:right;color:#2a2a2a;letter-spacing:0.55px;">800,000</div>
<div class="a" style="left:899.66px;top:294.66px;font-size:14.5px;line-height:14.5px;width:100px;text-align:right;color:#2a2a2a;letter-spacing:0.55px;">1,200,000</div>
<div class="a" style="left:44.2px;top:317.95000000000005px;font-size:13.6px;line-height:13.6px;color:#2a2a2a;">福岡支店</div>
<div class="a" style="left:86.97999999999999px;top:317.25000000000006px;font-size:14.5px;line-height:14.5px;width:100px;text-align:right;color:#2a2a2a;letter-spacing:0.55px;">1,000,000</div>
<div class="a" style="left:160.85999999999996px;top:317.25000000000006px;font-size:14.5px;line-height:14.5px;width:100px;text-align:right;color:#2a2a2a;letter-spacing:0.55px;">950,000</div>
<div class="a" style="left:234.73999999999995px;top:317.25000000000006px;font-size:14.5px;line-height:14.5px;width:100px;text-align:right;color:#2a2a2a;letter-spacing:0.55px;">1,050,000</div>
<div class="a" style="left:308.61999999999995px;top:317.25000000000006px;font-size:14.5px;line-height:14.5px;width:100px;text-align:right;color:#2a2a2a;letter-spacing:0.55px;">1,200,000</div>
<div class="a" style="left:382.49999999999994px;top:317.25000000000006px;font-size:14.5px;line-height:14.5px;width:100px;text-align:right;color:#2a2a2a;letter-spacing:0.55px;">1,150,000</div>
<div class="a" style="left:456.38px;top:317.25000000000006px;font-size:14.5px;line-height:14.5px;width:100px;text-align:right;color:#2a2a2a;letter-spacing:0.55px;">1,100,000</div>
<div class="a" style="left:530.26px;top:317.25000000000006px;font-size:14.5px;line-height:14.5px;width:100px;text-align:right;color:#2a2a2a;letter-spacing:0.55px;">1,150,000</div>
<div class="a" style="left:604.14px;top:317.25000000000006px;font-size:14.5px;line-height:14.5px;width:100px;text-align:right;color:#2a2a2a;letter-spacing:0.55px;">1,250,000</div>
<div class="a" style="left:678.02px;top:317.25000000000006px;font-size:14.5px;line-height:14.5px;width:100px;text-align:right;color:#2a2a2a;letter-spacing:0.55px;">1,400,000</div>
<div class="a" style="left:751.9px;top:317.25000000000006px;font-size:14.5px;line-height:14.5px;width:100px;text-align:right;color:#2a2a2a;letter-spacing:0.55px;">900,000</div>
<div class="a" style="left:825.78px;top:317.25000000000006px;font-size:14.5px;line-height:14.5px;width:100px;text-align:right;color:#2a2a2a;letter-spacing:0.55px;">1,100,000</div>
<div class="a" style="left:899.66px;top:317.25000000000006px;font-size:14.5px;line-height:14.5px;width:100px;text-align:right;color:#2a2a2a;letter-spacing:0.55px;">1,100,000</div>
<svg class="a" style="left:0;top:0" width="1024" height="761" viewBox="0 0 1024 761"><path d="M115.7 223.19V201.4M1002.26 223.19V201.4" fill="none" stroke="#8b5cbf" stroke-width="2.4"/><path d="M115.7 201.4H1002.26" fill="none" stroke="#8b5cbf" stroke-width="1.6"/><rect x="115.7" y="223.19" width="886.56" height="45.18000000000001" fill="none" stroke="#2c6cc4" stroke-width="3"/><path d="M42.099999999999994 223.19V268.37M41.3 223.19H113.7M41.3 268.37H113.7" fill="none" stroke="#c4403c" stroke-width="2.2"/><rect x="113.5" y="199.6" width="4.4" height="4.4" fill="#8b5cbf" stroke="#fff" stroke-width="1"/><rect x="1000.06" y="199.6" width="4.4" height="4.4" fill="#8b5cbf" stroke="#fff" stroke-width="1"/><rect x="113.10000000000001" y="220.59" width="5.2" height="5.2" fill="#2c6cc4" stroke="#fff" stroke-width="1"/><rect x="999.66" y="220.59" width="5.2" height="5.2" fill="#2c6cc4" stroke="#fff" stroke-width="1"/><rect x="113.10000000000001" y="265.77" width="5.2" height="5.2" fill="#2c6cc4" stroke="#fff" stroke-width="1"/><rect x="999.66" y="265.77" width="5.2" height="5.2" fill="#2c6cc4" stroke="#fff" stroke-width="1"/><rect x="40.5" y="221.39" width="3.6" height="3.6" fill="#c4403c" stroke="#fff" stroke-width="1"/><rect x="40.5" y="266.57" width="3.6" height="3.6" fill="#c4403c" stroke="#fff" stroke-width="1"/></svg>
<div class="a" style="left:88.9px;top:359.4px;width:913.5px;height:385.20000000000005px;background:#fff"></div>
<svg class="a" style="left:0;top:0" width="1024" height="761" viewBox="0 0 1024 761"><path d="M146.30 430.7V708.7" stroke="#d9d9d9" stroke-width="1"/><path d="M283.64 430.7V708.7" stroke="#d9d9d9" stroke-width="1"/><path d="M420.98 430.7V708.7" stroke="#d9d9d9" stroke-width="1"/><path d="M558.32 430.7V708.7" stroke="#d9d9d9" stroke-width="1"/><path d="M695.66 430.7V708.7" stroke="#d9d9d9" stroke-width="1"/><path d="M833.00 430.7V708.7" stroke="#d9d9d9" stroke-width="1"/><path d="M970.34 430.7V708.7" stroke="#d9d9d9" stroke-width="1"/><rect x="146.3" y="689.40" width="357.08" height="7.8" fill="#e07f41"/><rect x="146.3" y="697.20" width="480.69" height="7.8" fill="#4f71be"/><rect x="146.3" y="666.19" width="343.35" height="7.8" fill="#e07f41"/><rect x="146.3" y="673.99" width="453.22" height="7.8" fill="#4f71be"/><rect x="146.3" y="642.98" width="384.55" height="7.8" fill="#e07f41"/><rect x="146.3" y="650.78" width="521.89" height="7.8" fill="#4f71be"/><rect x="146.3" y="619.77" width="425.75" height="7.8" fill="#e07f41"/><rect x="146.3" y="627.57" width="576.83" height="7.8" fill="#4f71be"/><rect x="146.3" y="596.56" width="384.55" height="7.8" fill="#e07f41"/><rect x="146.3" y="604.36" width="535.63" height="7.8" fill="#4f71be"/><rect x="146.3" y="573.35" width="370.82" height="7.8" fill="#e07f41"/><rect x="146.3" y="581.15" width="508.16" height="7.8" fill="#4f71be"/><rect x="146.3" y="550.14" width="398.29" height="7.8" fill="#e07f41"/><rect x="146.3" y="557.94" width="549.36" height="7.8" fill="#4f71be"/><rect x="146.3" y="526.93" width="425.75" height="7.8" fill="#e07f41"/><rect x="146.3" y="534.73" width="604.30" height="7.8" fill="#4f71be"/><rect x="146.3" y="503.72" width="466.96" height="7.8" fill="#e07f41"/><rect x="146.3" y="511.52" width="686.70" height="7.8" fill="#4f71be"/><rect x="146.3" y="480.51" width="329.62" height="7.8" fill="#e07f41"/><rect x="146.3" y="488.31" width="412.02" height="7.8" fill="#4f71be"/><rect x="146.3" y="457.30" width="27.47" height="7.8" fill="#e07f41"/><rect x="146.3" y="465.10" width="439.49" height="7.8" fill="#4f71be"/><rect x="146.3" y="434.09" width="412.02" height="7.8" fill="#e07f41"/><rect x="146.3" y="441.89" width="494.42" height="7.8" fill="#4f71be"/><rect x="195" y="450" width="9.8" height="8.6" fill="#e07f41"/><rect x="195" y="480" width="9.8" height="8.3" fill="#4f71be"/></svg>
<div class="a" style="left:31.4px;top:690.0px;font-size:14px;line-height:14px;width:100px;text-align:right;color:#595959;-webkit-text-stroke:0;">4月</div>
<div class="a" style="left:31.4px;top:666.79px;font-size:14px;line-height:14px;width:100px;text-align:right;color:#595959;-webkit-text-stroke:0;">5月</div>
<div class="a" style="left:31.4px;top:643.58px;font-size:14px;line-height:14px;width:100px;text-align:right;color:#595959;-webkit-text-stroke:0;">6月</div>
<div class="a" style="left:31.4px;top:620.37px;font-size:14px;line-height:14px;width:100px;text-align:right;color:#595959;-webkit-text-stroke:0;">7月</div>
<div class="a" style="left:31.4px;top:597.16px;font-size:14px;line-height:14px;width:100px;text-align:right;color:#595959;-webkit-text-stroke:0;">8月</div>
<div class="a" style="left:31.4px;top:573.95px;font-size:14px;line-height:14px;width:100px;text-align:right;color:#595959;-webkit-text-stroke:0;">9月</div>
<div class="a" style="left:31.4px;top:550.74px;font-size:14px;line-height:14px;width:100px;text-align:right;color:#595959;-webkit-text-stroke:0;">10月</div>
<div class="a" style="left:31.4px;top:527.53px;font-size:14px;line-height:14px;width:100px;text-align:right;color:#595959;-webkit-text-stroke:0;">11月</div>
<div class="a" style="left:31.4px;top:504.32000000000005px;font-size:14px;line-height:14px;width:100px;text-align:right;color:#595959;-webkit-text-stroke:0;">12月</div>
<div class="a" style="left:31.4px;top:481.11000000000007px;font-size:14px;line-height:14px;width:100px;text-align:right;color:#595959;-webkit-text-stroke:0;">1月</div>
<div class="a" style="left:31.4px;top:457.90000000000003px;font-size:14px;line-height:14px;width:100px;text-align:right;color:#595959;-webkit-text-stroke:0;">2月</div>
<div class="a" style="left:31.4px;top:434.69000000000005px;font-size:14px;line-height:14px;width:100px;text-align:right;color:#595959;-webkit-text-stroke:0;">3月</div>
<div class="a" style="left:-3.7px;top:718.5px;font-size:13.8px;line-height:13.8px;width:300px;text-align:center;color:#595959;-webkit-text-stroke:0;">0</div>
<div class="a" style="left:133.64px;top:718.5px;font-size:13.8px;line-height:13.8px;width:300px;text-align:center;color:#595959;-webkit-text-stroke:0;">500</div>
<div class="a" style="left:270.98px;top:718.5px;font-size:13.8px;line-height:13.8px;width:300px;text-align:center;color:#595959;-webkit-text-stroke:0;">1,000</div>
<div class="a" style="left:408.32px;top:718.5px;font-size:13.8px;line-height:13.8px;width:300px;text-align:center;color:#595959;-webkit-text-stroke:0;">1,500</div>
<div class="a" style="left:545.66px;top:718.5px;font-size:13.8px;line-height:13.8px;width:300px;text-align:center;color:#595959;-webkit-text-stroke:0;">2,000</div>
<div class="a" style="left:683.0px;top:718.5px;font-size:13.8px;line-height:13.8px;width:300px;text-align:center;color:#595959;-webkit-text-stroke:0;">2,500</div>
<div class="a" style="left:820.34px;top:718.5px;font-size:13.8px;line-height:13.8px;width:300px;text-align:center;color:#595959;-webkit-text-stroke:0;">3,000</div>
<div class="a" style="left:510.28px;top:686.1px;font-size:13px;line-height:13px;color:#4a4a4a;-webkit-text-stroke:0;">1,300,000</div>
<div class="a" style="left:633.89px;top:694.7px;font-size:13px;line-height:13px;color:#4a4a4a;-webkit-text-stroke:0;">1,750,000</div>
<div class="a" style="left:496.55px;top:662.89px;font-size:13px;line-height:13px;color:#4a4a4a;-webkit-text-stroke:0;">1,250,000</div>
<div class="a" style="left:606.42px;top:671.49px;font-size:13px;line-height:13px;color:#4a4a4a;-webkit-text-stroke:0;">1,650,000</div>
<div class="a" style="left:537.75px;top:639.68px;font-size:13px;line-height:13px;color:#4a4a4a;-webkit-text-stroke:0;">1,400,000</div>
<div class="a" style="left:675.09px;top:648.28px;font-size:13px;line-height:13px;color:#4a4a4a;-webkit-text-stroke:0;">1,900,000</div>
<div class="a" style="left:578.95px;top:616.47px;font-size:13px;line-height:13px;color:#4a4a4a;-webkit-text-stroke:0;">1,550,000</div>
<div class="a" style="left:730.03px;top:625.07px;font-size:13px;line-height:13px;color:#4a4a4a;-webkit-text-stroke:0;">2,100,000</div>
<div class="a" style="left:537.75px;top:593.26px;font-size:13px;line-height:13px;color:#4a4a4a;-webkit-text-stroke:0;">1,400,000</div>
<div class="a" style="left:688.83px;top:601.86px;font-size:13px;line-height:13px;color:#4a4a4a;-webkit-text-stroke:0;">1,950,000</div>
<div class="a" style="left:524.02px;top:570.05px;font-size:13px;line-height:13px;color:#4a4a4a;-webkit-text-stroke:0;">1,350,000</div>
<div class="a" style="left:661.36px;top:578.65px;font-size:13px;line-height:13px;color:#4a4a4a;-webkit-text-stroke:0;">1,850,000</div>
<div class="a" style="left:551.49px;top:546.84px;font-size:13px;line-height:13px;color:#4a4a4a;-webkit-text-stroke:0;">1,450,000</div>
<div class="a" style="left:702.56px;top:555.44px;font-size:13px;line-height:13px;color:#4a4a4a;-webkit-text-stroke:0;">2,000,000</div>
<div class="a" style="left:578.95px;top:523.63px;font-size:13px;line-height:13px;color:#4a4a4a;-webkit-text-stroke:0;">1,550,000</div>
<div class="a" style="left:757.5px;top:532.23px;font-size:13px;line-height:13px;color:#4a4a4a;-webkit-text-stroke:0;">2,200,000</div>
<div class="a" style="left:620.16px;top:500.42px;font-size:13px;line-height:13px;color:#4a4a4a;-webkit-text-stroke:0;">1,700,000</div>
<div class="a" style="left:839.9px;top:509.02px;font-size:13px;line-height:13px;color:#4a4a4a;-webkit-text-stroke:0;">2,500,000</div>
<div class="a" style="left:482.82px;top:477.21px;font-size:13px;line-height:13px;color:#4a4a4a;-webkit-text-stroke:0;">1,200,000</div>
<div class="a" style="left:565.22px;top:485.81px;font-size:13px;line-height:13px;color:#4a4a4a;-webkit-text-stroke:0;">1,500,000</div>
<div class="a" style="left:180.67px;top:454.0px;font-size:13px;line-height:13px;color:#4a4a4a;-webkit-text-stroke:0;">100,000</div>
<div class="a" style="left:592.69px;top:462.6px;font-size:13px;line-height:13px;color:#4a4a4a;-webkit-text-stroke:0;">1,600,000</div>
<div class="a" style="left:565.22px;top:430.79px;font-size:13px;line-height:13px;color:#4a4a4a;-webkit-text-stroke:0;">1,500,000</div>
<div class="a" style="left:647.62px;top:439.39px;font-size:13px;line-height:13px;color:#4a4a4a;-webkit-text-stroke:0;">1,800,000</div>
<div class="a" style="left:210.3px;top:444.5px;font-size:14.5px;line-height:14.5px;color:#595959;-webkit-text-stroke:0;">横浜支店</div>
<div class="a" style="left:210.3px;top:474.5px;font-size:14.5px;line-height:14.5px;color:#595959;-webkit-text-stroke:0;">東京本社</div>
<div class="a" style="left:395.0px;top:380.3px;font-size:20.9px;line-height:20.9px;width:300px;text-align:center;color:#595959;-webkit-text-stroke:0;">支店別売上高</div>
<svg class="a" style="left:0;top:0" width="1024" height="761" viewBox="0 0 1024 761"><rect x="88.9" y="359.4" width="913.5" height="385.20000000000005" fill="none" stroke="#508a5f" stroke-width="1.4"/><circle cx="88.9" cy="359.4" r="3.2" fill="#fff" stroke="#7a7a7a" stroke-width="1.2"/><circle cx="545.65" cy="359.4" r="3.2" fill="#fff" stroke="#7a7a7a" stroke-width="1.2"/><circle cx="1002.4" cy="359.4" r="3.2" fill="#fff" stroke="#7a7a7a" stroke-width="1.2"/><circle cx="88.9" cy="552.0" r="3.2" fill="#fff" stroke="#7a7a7a" stroke-width="1.2"/><circle cx="1002.4" cy="552.0" r="3.2" fill="#fff" stroke="#7a7a7a" stroke-width="1.2"/><circle cx="88.9" cy="744.6" r="3.2" fill="#fff" stroke="#7a7a7a" stroke-width="1.2"/><circle cx="545.65" cy="744.6" r="3.2" fill="#fff" stroke="#7a7a7a" stroke-width="1.2"/><circle cx="1002.4" cy="744.6" r="3.2" fill="#fff" stroke="#7a7a7a" stroke-width="1.2"/></svg>
</body></html>
